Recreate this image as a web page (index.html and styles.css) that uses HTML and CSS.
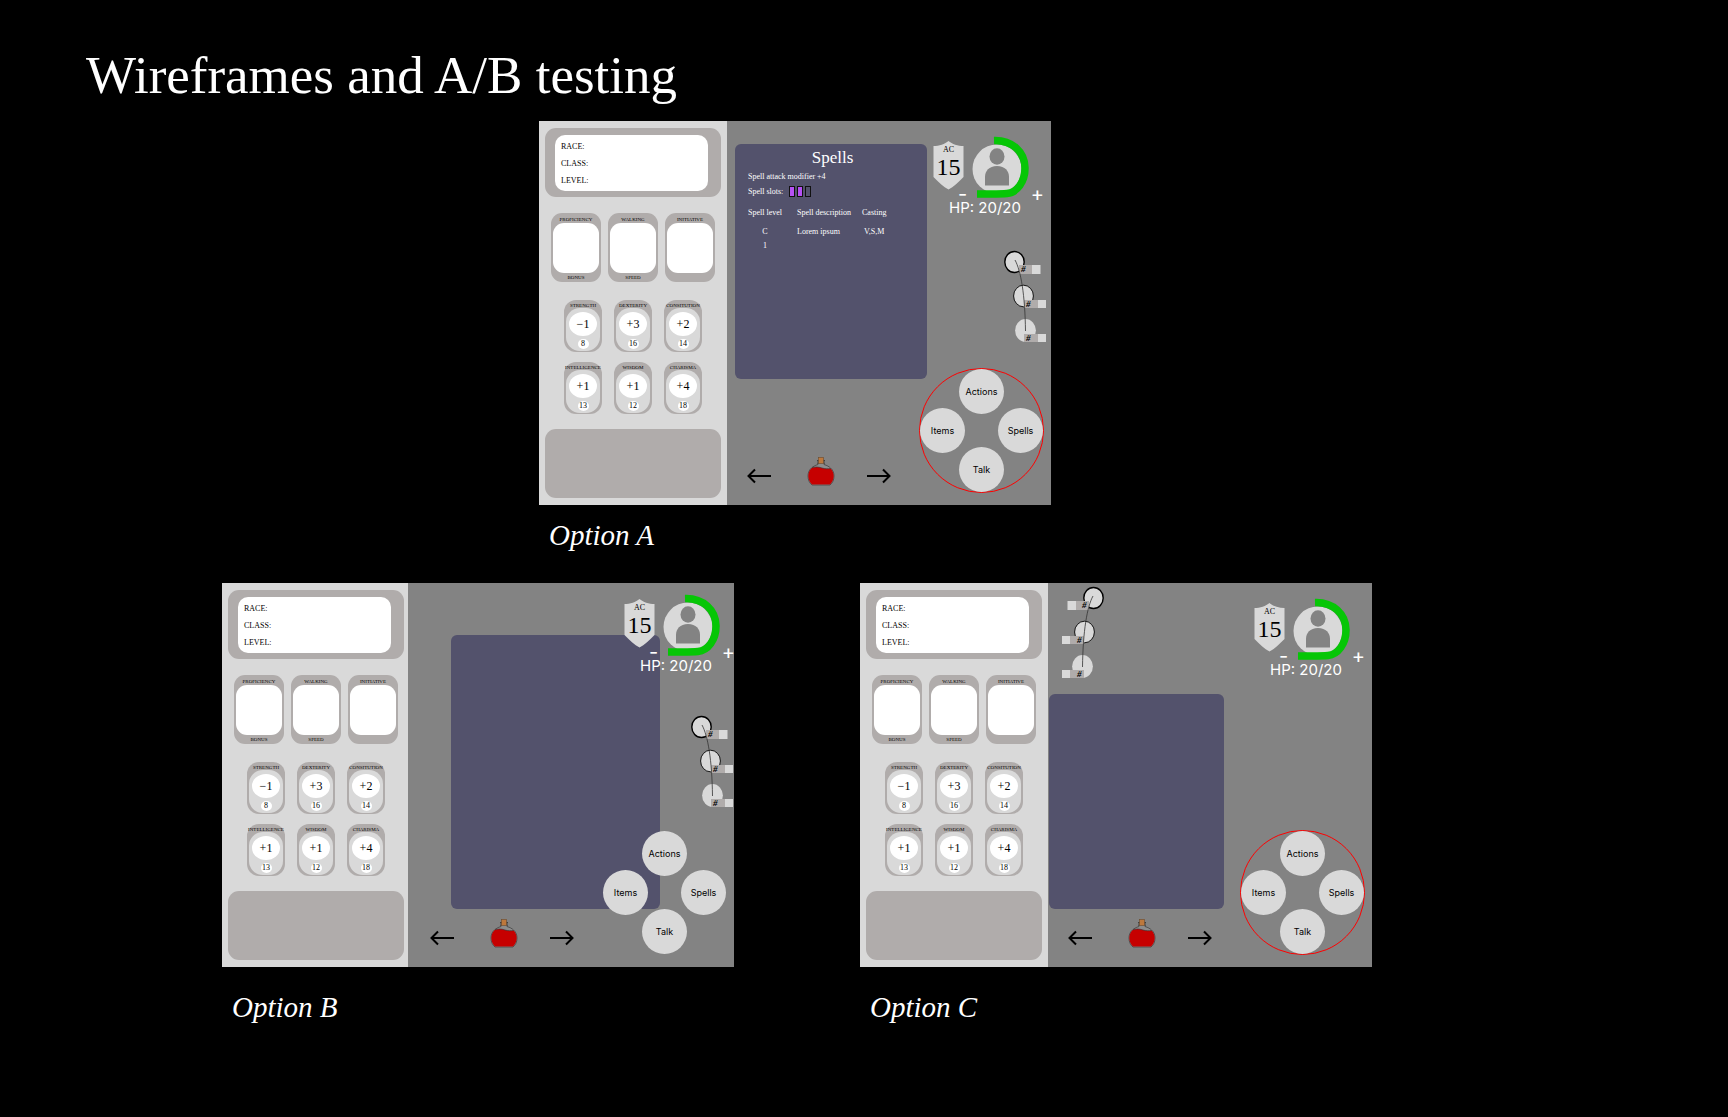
FILE: index.html
```html
<!DOCTYPE html>
<html lang="en">
<head>
<meta charset="utf-8">
<title>Wireframes and A/B testing</title>
<link rel="stylesheet" href="styles.css">
</head>
<body>
<svg class="defs" aria-hidden="true">
  <symbol id="arrow-left" viewBox="0 0 24 20"><path d="M8 3.500 1.500 10 8 16.500M1.500 10H24" fill="none" stroke="#000" stroke-width="2"/></symbol>
  <symbol id="arrow-right" viewBox="0 0 24 20"><path d="M16 3.500 22.500 10 16 16.500M22.500 10H0" fill="none" stroke="#000" stroke-width="2"/></symbol>
  <symbol id="potion" viewBox="0 0 28 30">
    <path d="M11 7v1.500C8 9.500 6 10.500 4.500 12 2 14 1 17 1 20c0 4 1.500 7 4 9h18c2.500-2 4-5 4-9 0-3-1-6-3.500-8C22 10.500 20 9.500 17 8.500V7" fill="#8c8c8c" stroke="#444" stroke-width=".8"/>
    <path d="M5 11.700c4-1.200 7-.7 10 .3 3 1 6 .8 8.500.5 2.200 2 3.200 4.500 3.200 7.500 0 3.500-1.500 6.500-3.700 8.500H5C2.800 26.500 1.300 23.500 1.300 20c0-3.200 1.200-6.300 3.700-8.300Z" fill="#c60000"/>
    <path d="M5 11.700c4-1.200 7-.7 10 .3 3 1 6 .8 8.500.5" fill="none" stroke="#333" stroke-width=".6"/>
    <path d="M10 4.500h8M11 4.500V8M17 4.500V8" stroke="#333" stroke-width=".8"/>
    <rect x="11.500" y="1.500" width="5" height="6" fill="#bd783c" stroke="#6b4a2c" stroke-width=".6"/>
  </symbol>
  <symbol id="shield" viewBox="0 0 31 49"><path d="M15.500 0C12 3 6 5 .5 5v31c5 5 10 10 15 12.500C20.500 46 25.500 41 30.500 36V5C25 5 19 3 15.500 0Z" fill="#d9d9d9"/></symbol>
  <symbol id="avatar" viewBox="0 0 58 63">
    <circle cx="25" cy="33" r="24.500" fill="#d9d9d9"/>
    <ellipse cx="25" cy="20.500" rx="7.500" ry="8.300" fill="#838383"/>
    <path d="M13 49.500V41c0-6 4-11 12-11s12 5 12 11v8.500Z" fill="#838383"/>
    <path d="M22 4.500C40 4 53 16 53 32c0 14-8 24.500-18 25.500-8 .8-18 .4-30 .4" fill="none" stroke="#06c606" stroke-width="7.500"/>
  </symbol>
  <symbol id="tokens" viewBox="0 0 44 94">
    <ellipse cx="11.500" cy="12" rx="9.700" ry="10.500" fill="#d9d9d9" stroke="#000" stroke-width="1.400"/>
    <ellipse cx="20.500" cy="46" rx="9.900" ry="10.800" fill="#d9d9d9" stroke="#000" stroke-width=".9"/>
    <ellipse cx="22.500" cy="80.500" rx="10.400" ry="11.400" fill="#d9d9d9"/>
    <path d="M16 15h13v9H16zM21 50h14v8H21zM21 84h14v8H21z" fill="#b0acab"/>
    <path d="M29 15h8.500v9H29zM35 50h8v8H35zM35 84h8v8H35z" fill="#d9d9d9"/>
    <path d="M12 10C18 21 22 45 22.500 81" fill="none" stroke="#333" stroke-width=".8"/>
  </symbol>
</svg>

<template id="sheet">
  <aside class="sheet">
    <div class="identity"><div class="identity-lines"><span>RACE:</span><span>CLASS:</span><span>LEVEL:</span></div></div>
    <div class="traits">
      <div class="trait"><span>PROFICIENCY</span><div class="trait-value"></div><span>BONUS</span></div>
      <div class="trait"><span>WALKING</span><div class="trait-value"></div><span>SPEED</span></div>
      <div class="trait"><span>INITIATIVE</span><div class="trait-value"></div><span></span></div>
    </div>
    <div class="abilities">
      <div class="ability"><span>STRENGTH</span><div class="ability-body"><b>−1</b><i>8</i></div></div>
      <div class="ability"><span>DEXTERITY</span><div class="ability-body"><b>+3</b><i>16</i></div></div>
      <div class="ability"><span>CONSITUTION</span><div class="ability-body"><b>+2</b><i>14</i></div></div>
      <div class="ability"><span>INTELLIGENCE</span><div class="ability-body"><b>+1</b><i>13</i></div></div>
      <div class="ability"><span>WISDOM</span><div class="ability-body"><b>+1</b><i>12</i></div></div>
      <div class="ability"><span>CHARISMA</span><div class="ability-body"><b>+4</b><i>18</i></div></div>
    </div>
    <div class="notes"></div>
  </aside>
</template>

<template id="controls">
  <div class="item-bar">
    <button class="item-button" aria-label="Previous item"><svg width="24" height="20"><use href="#arrow-left"/></svg></button>
    <svg width="28" height="30"><use href="#potion"/></svg>
    <button class="item-button" aria-label="Next item"><svg width="24" height="20"><use href="#arrow-right"/></svg></button>
  </div>
  <div class="hud">
    <div class="hud-top">
      <div class="armor"><svg class="armor-shape" width="31" height="49"><use href="#shield"/></svg><span class="armor-label">AC</span><span class="armor-value">15</span></div>
      <svg width="58" height="63"><use href="#avatar"/></svg>
    </div>
    <div class="hp">HP: 20/20</div>
    <button class="hp-button hp-minus">-</button>
    <button class="hp-button hp-plus">+</button>
  </div>
  <div class="wheel">
    <button>Actions</button>
    <div class="wheel-middle"><button>Items</button><button>Spells</button></div>
    <button>Talk</button>
  </div>
</template>

<h1 class="title">Wireframes and A/B testing</h1>
<main class="boards">
  <div class="board-row board-row-first">
    <figure class="option option-a">
      <div class="frame">
        <div class="slot" data-template="sheet"></div>
        <section class="stage">
          <div class="panel">
            <h2>Spells</h2>
            <p>Spell attack modifier +4</p>
            <p class="slots">Spell slots: <span class="slot-boxes"><span class="slot-box used"></span><span class="slot-box used"></span><span class="slot-box"></span></span></p>
            <table>
              <thead><tr><th>Spell level</th><th>Spell description</th><th>Casting</th></tr></thead>
              <tbody><tr><td>C</td><td>Lorem ipsum</td><td>V,S,M</td></tr><tr><td>1</td><td></td><td></td></tr></tbody>
            </table>
          </div>
          <div class="slot" data-template="controls"></div>
          <svg class="tokens" width="44" height="94"><use href="#tokens"/><text x="18" y="22">#</text><text x="23" y="57">#</text><text x="23" y="91">#</text></svg>
        </section>
      </div>
      <figcaption>Option A</figcaption>
    </figure>
  </div>
  <div class="board-row">
    <figure class="option option-b">
      <div class="frame">
        <div class="slot" data-template="sheet"></div>
        <section class="stage">
          <div class="panel"></div>
          <div class="slot" data-template="controls"></div>
          <svg class="tokens" width="44" height="94"><use href="#tokens"/><text x="18" y="22">#</text><text x="23" y="57">#</text><text x="23" y="91">#</text></svg>
        </section>
      </div>
      <figcaption>Option B</figcaption>
    </figure>
    <figure class="option option-c">
      <div class="frame">
        <div class="slot" data-template="sheet"></div>
        <section class="stage">
          <div class="panel"></div>
          <div class="slot" data-template="controls"></div>
          <svg class="tokens" width="44" height="94"><g transform="translate(44 0) scale(-1 1)"><use href="#tokens" width="44" height="94"/></g><text x="21" y="22">#</text><text x="16" y="57">#</text><text x="16" y="91">#</text></svg>
        </section>
      </div>
      <figcaption>Option C</figcaption>
    </figure>
  </div>
</main>
<script src="script.js"></script>
</body>
</html>
```
FILE: styles.css
```css
* { box-sizing: border-box; }

body {
  margin: 0;
  min-height: 100vh;
  background: #000;
  color: #fff;
  font-family: "Liberation Serif", serif;
}

button {
  margin: 0;
  padding: 0;
  border: 0;
  background: none;
  font: inherit;
  color: inherit;
}

svg { display: block; flex: none; }
.defs { position: absolute; width: 0; height: 0; }
.slot { display: contents; }

.title {
  margin: 0;
  padding: 45px 86px 16px;
  font-size: 53px;
  line-height: 60px;
  font-weight: 400;
}

.boards {
  display: flex;
  flex-direction: column;
  gap: 28px;
  padding-right: 134px;
}

.board-row { display: flex; justify-content: center; gap: 126px; }
.board-row-first { padding-right: 4px; }

.option { margin: 0; width: 512px; }
.option figcaption {
  padding: 20px 10px 0;
  font-size: 29px;
  line-height: 40px;
  font-style: italic;
}
.option-a figcaption { padding-top: 10px; }

.frame { display: flex; background: #838383; overflow: hidden; }

/* character sheet */
.sheet {
  width: 188px;
  padding: 7px 6px;
  background: #d9d9d9;
  color: #000;
}
.option-b .sheet { width: 186px; padding-right: 4px; }

.identity {
  padding: 7px 13px 6px 10px;
  border-radius: 11px;
  background: #b0acab;
}
.identity-lines {
  display: flex;
  flex-direction: column;
  padding: 3px 6px;
  height: 56px;
  border-radius: 10px;
  background: #fff;
  font-size: 8px;
  line-height: 17px;
}

.traits { display: flex; gap: 7px; margin-top: 16px; padding-left: 6px; }
.trait {
  width: 50px;
  padding: 0 2px;
  border-radius: 11px;
  background: #b0acab;
  font-size: 5px;
  text-align: center;
}
.trait span { display: block; height: 10px; line-height: 14px; }
.trait span:last-child { height: 9px; line-height: 10px; }
.trait-value { height: 50px; border-radius: 11px; background: #fff; }

.abilities {
  display: grid;
  grid-template-columns: repeat(3, 38px);
  gap: 10px 12px;
  margin-top: 18px;
  padding-left: 19px;
}
.ability {
  height: 52px;
  padding: 0 2px 1px;
  border-radius: 12px;
  background: #b0acab;
  font-size: 5px;
}
.ability span {
  display: flex;
  justify-content: center;
  height: 8px;
  line-height: 12px;
  white-space: nowrap;
}
.ability-body {
  display: flex;
  flex-direction: column;
  align-items: center;
  gap: 3px;
  height: 43px;
  padding-top: 4px;
  border-radius: 14px;
  background: #d9d9d9;
}
.ability b, .ability i {
  border-radius: 50%;
  background: #fff;
  font-weight: 400;
  font-style: normal;
  text-align: center;
}
.ability b { width: 28px; height: 24px; font-size: 12px; line-height: 24px; }
.ability i { width: 11px; height: 10px; font-size: 8px; line-height: 10px; }

.notes { height: 69px; margin-top: 15px; border-radius: 11px; background: #b0acab; }

/* play area */
.stage {
  position: relative;
  flex: 1;
  display: flex;
  flex-direction: column;
  justify-content: space-between;
}
.panel { border-radius: 6px; background: #53526c; }
.option-a .panel { width: 192px; height: 235px; margin: 23px 0 0 8px; padding: 4px 10px 4px 13px; }
.option-b .panel { width: 209px; height: 274px; margin: 52px 0 0 43px; }
.option-c .panel { width: 175px; height: 215px; margin: 111px 0 0 1px; }

.panel h2 { margin: 0; font-size: 17px; line-height: 20px; font-weight: 400; text-align: center; }
.panel p { margin: 2px 0 0; font-size: 8px; line-height: 13px; }
.panel .slots { display: flex; gap: 6px; }
.slot-boxes { display: flex; gap: 2px; padding-top: 1px; }
.slot-box { width: 6px; height: 11px; border: 1px solid #111; }
.slot-box.used { background: #b651f5; }
.panel table { margin-top: 8px; border-collapse: collapse; font-size: 8px; line-height: 14px; white-space: nowrap; }
.panel th { padding: 0 11px 0 0; font-weight: 400; text-align: left; }
.panel td { padding: 0 11px 0 0; }
.panel tbody tr:first-child td { padding-top: 5px; }
.panel th:first-child, .panel td:first-child { padding-right: 15px; }
.panel th:last-child, .panel td:last-child { padding-right: 0; }
.panel td:first-child, .panel td:last-child { text-align: center; }

.item-bar {
  display: flex;
  align-items: flex-end;
  justify-content: space-between;
  width: 164px;
  padding: 0 0 19px 20px;
}
.option-b .item-bar { width: 166px; padding-left: 22px; }
.item-bar > svg { margin-left: 3px; }

.hud { position: absolute; top: 15px; right: 7px; width: 111px; }
.option-b .hud { top: 11px; right: -1px; }
.hud-top { display: flex; gap: 8px; }
.armor {
  position: relative;
  display: flex;
  flex-direction: column;
  width: 31px;
  height: 49px;
  margin-top: 5px;
  color: #000;
  text-align: center;
}
.armor-shape { position: absolute; top: 0; left: 0; }
.armor span { position: relative; }
.armor-label { padding-top: 4px; font-size: 8px; line-height: 10px; }
.armor-value { font-size: 24px; line-height: 24px; }
.hp { padding-left: 16px; font: 15px/18px Inter, sans-serif; }
.hp-button { position: absolute; top: 54px; height: 9px; font: 20px/9px Inter, sans-serif; }
.hp-minus { left: 25px; }
.hp-plus { right: 0; }

.tokens { position: absolute; top: 129px; right: 4px; }
.tokens text { font-size: 9px; font-style: italic; font-weight: 700; }
.option-b .tokens { top: 132px; right: 0; }
.option-c .tokens { top: 3px; right: auto; left: 13px; }

.wheel {
  position: absolute;
  right: 7px;
  bottom: 12px;
  display: flex;
  flex-direction: column;
  align-items: center;
  width: 125px;
  border: 1px solid #f00;
  border-radius: 50%;
  color: #000;
}
.option-b .wheel { border-color: transparent; }
.wheel button {
  width: 45px;
  height: 45px;
  border-radius: 50%;
  background: #d9d9d9;
  font: 9px/12px Inter, sans-serif;
}
.wheel-middle { display: flex; justify-content: space-between; align-self: stretch; margin: -6px 0; }
```
FILE: script.js
```js
// Every option shares the same character sheet and play controls.
document.querySelectorAll("[data-template]").forEach((slot) => {
  const template = document.getElementById(slot.dataset.template);
  slot.append(template.content.cloneNode(true));
});
```
